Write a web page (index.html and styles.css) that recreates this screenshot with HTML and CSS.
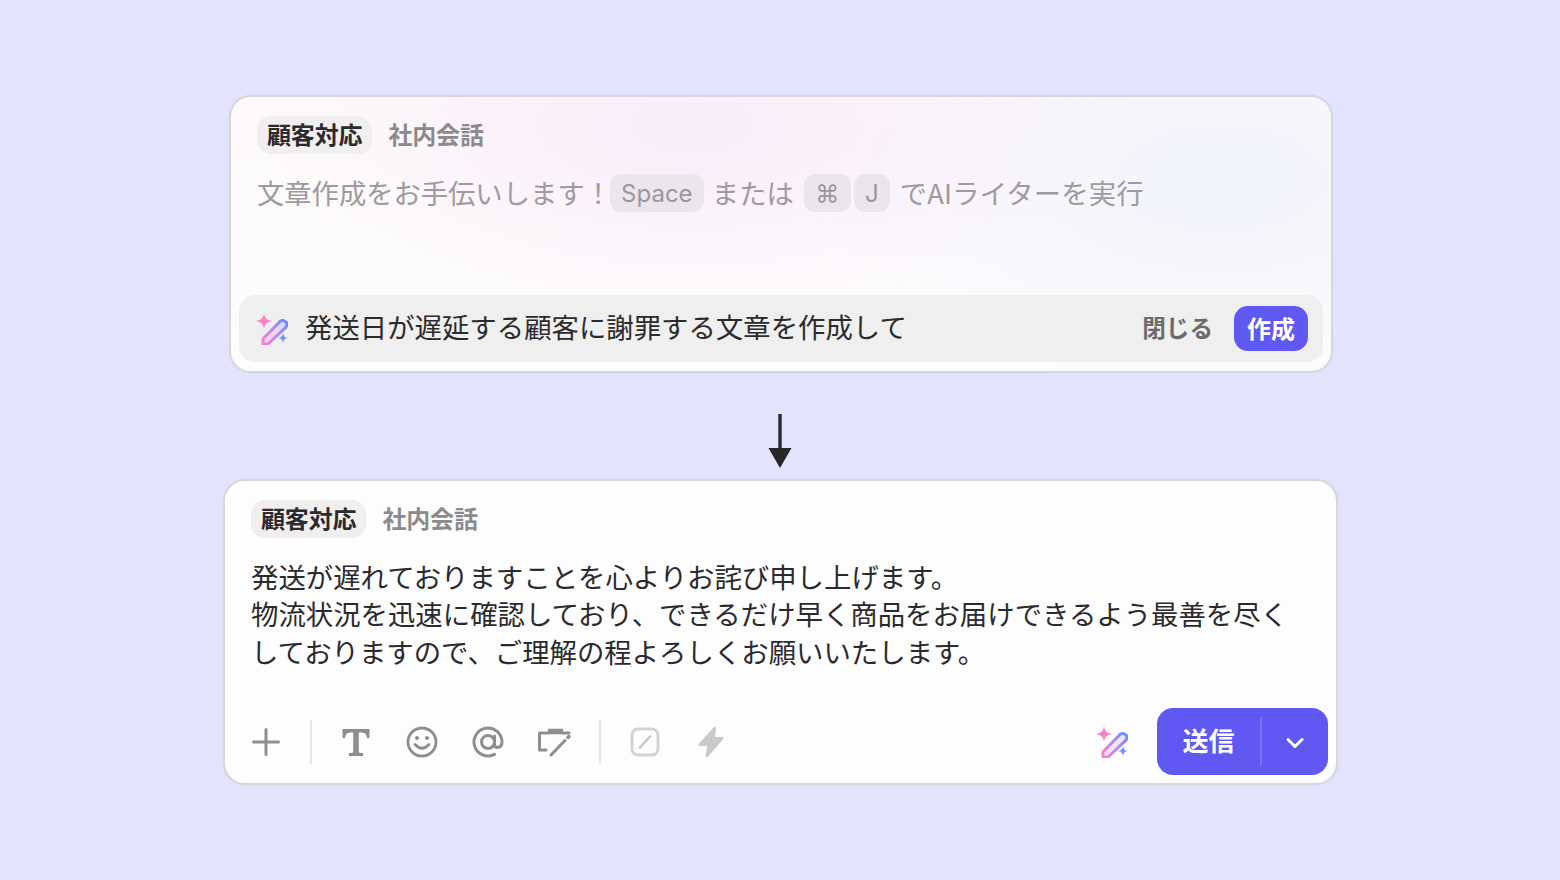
FILE: index.html
```html
<!DOCTYPE html>
<html lang="ja">
<head>
  <meta charset="UTF-8" />
  <meta name="viewport" content="width=device-width, initial-scale=1" />
  <title>AIライター</title>
  <link rel="stylesheet" href="styles.css">
</head>
<body>
  <svg class="defs" width="0" height="0" aria-hidden="true">
    <defs>
      <linearGradient id="magicGrad" gradientUnits="userSpaceOnUse" x1="6" y1="31" x2="31" y2="7">
        <stop offset="0" stop-color="#ff7fc8" />
        <stop offset="0.5" stop-color="#c285ea" />
        <stop offset="1" stop-color="#5f8dfb" />
      </linearGradient>
      <symbol id="magic" viewBox="0 0 32 32">
        <path d="M8 0 C8.8 5 10.5 6.8 16 8 C10.5 9.2 8.8 11 8 16 C7.2 11 5.5 9.2 0 8 C5.5 6.8 7.2 5 8 0Z" fill="#fb7fc4" />
        <path d="M27 19.5 C27.4 23 28.5 24.4 32 25 C28.5 25.6 27.4 27 27 30.5 C26.6 27 25.5 25.6 22 25 C25.5 24.4 26.6 23 27 19.5Z" fill="#6f95fb" />
        <path d="M7 31 L7 26 L24 8.5 Q27 6.4 29.8 8.8 Q32 11.6 29.8 14.4 L12 31 Z" fill="url(#magicGrad)" fill-opacity="0.2" stroke="url(#magicGrad)" stroke-width="3" stroke-linejoin="round" />
      </symbol>
    </defs>
  </svg>

  <section class="card card-ai">
    <div class="tabs">
      <span class="tab active">顧客対応</span>
      <span class="tab">社内会話</span>
    </div>
    <div class="placeholder">
      <span class="ph-text">文章作成をお手伝いします！</span>
      <kbd class="key key-space">Space</kbd>
      <span class="ph-text word-or">または</span>
      <kbd class="key key-cmd">⌘</kbd>
      <kbd class="key key-j">J</kbd>
      <span class="ph-text word-run">でAIライターを実行</span>
    </div>
    <div class="prompt-bar">
      <svg class="magic-icon" width="32" height="32"><use href="#magic" /></svg>
      <span class="prompt-text">発送日が遅延する顧客に謝罪する文章を作成して</span>
      <span class="close-btn">閉じる</span>
      <button class="create-btn">作成</button>
    </div>
  </section>

  <div class="arrow">
    <svg width="24" height="54" viewBox="0 0 24 54">
      <path d="M12 0 V36" stroke="#27272a" stroke-width="3.4" />
      <path d="M0.5 34 H23.5 L12 54 Z" fill="#27272a" />
    </svg>
  </div>

  <section class="card card-result">
    <div class="tabs">
      <span class="tab active">顧客対応</span>
      <span class="tab">社内会話</span>
    </div>
    <div class="message">
      <p>発送が遅れておりますことを心よりお詫び申し上げます。</p>
      <p>物流状況を迅速に確認しており、できるだけ早く商品をお届けできるよう最善を尽く</p>
      <p>しておりますので、ご理解の程よろしくお願いいたします。</p>
    </div>
    <div class="toolbar">
      <span class="tool">
        <svg width="28" height="28" viewBox="0 0 28 28"><path d="M14 1.5 V26.5 M1.5 14 H26.5" stroke="#8e8e8e" stroke-width="3" stroke-linecap="round" /></svg>
      </span>
      <span class="tool-sep"></span>
      <span class="tool">
        <svg width="30" height="30" viewBox="0 0 30 30"><path d="M1.5 2 H28.5 V11 H26 Q25.5 6 21 5.6 H17.8 V24.5 Q17.8 26 20 26 H22 V29 H8 V26 H10 Q12.2 26 12.2 24.5 V5.6 H9 Q4.5 6 4 11 H1.5 Z" fill="#8e8e8e" /></svg>
      </span>
      <span class="tool">
        <svg width="32" height="32" viewBox="0 0 32 32" fill="none" stroke="#8e8e8e" stroke-width="2.8" stroke-linecap="round"><circle cx="16" cy="16" r="14" /><path d="M9 18.5 Q16 26 23 18.5" /><circle cx="11" cy="12" r="1.5" fill="#8e8e8e" stroke-width="1" /><circle cx="21" cy="12" r="1.5" fill="#8e8e8e" stroke-width="1" /></svg>
      </span>
      <span class="tool">
        <svg width="32" height="32" viewBox="0 0 32 32" fill="none" stroke="#8e8e8e" stroke-width="3" stroke-linecap="round"><circle cx="16" cy="16" r="6.5" /><path d="M22.5 10 V18.5 Q22.5 21.5 26 21.5 Q30 21 30 15.5 A14 14 0 1 0 22.5 28.4" /></svg>
      </span>
      <span class="tool">
        <svg width="34" height="30" viewBox="0 0 34 30" fill="none" stroke="#8e8e8e" stroke-width="3" stroke-linecap="round" stroke-linejoin="round"><path d="M11 6 H2.5 V23 H9" /><path d="M26 6 H32" /><path d="M11 4.5 H26" stroke-width="5.5" stroke-linecap="butt" /><path d="M14 28 L28 13.5" /><path d="M31 10.5 L32 9.5" stroke-width="3.4" /></svg>
      </span>
      <span class="tool-sep tool-sep-wide"></span>
      <span class="tool">
        <svg width="30" height="30" viewBox="0 0 30 30" fill="none" stroke="#d3d3d3" stroke-width="3" stroke-linecap="round"><rect x="2" y="2" width="26" height="26" rx="6" /><path d="M10 20.5 L20 9.5" stroke="#c8c8c8" stroke-width="2.6" /></svg>
      </span>
      <span class="tool">
        <svg width="28" height="34" viewBox="0 0 28 34"><path d="M17.5 1.5 Q19 1 19 3 L18 12 H25 Q27 12.5 26 14.5 L11 31.5 Q8.5 33.5 8.5 30.5 L10 21 H3 Q1 20.5 2 18.5 Z" fill="#c9c9c9" /></svg>
      </span>
      <span class="spacer"></span>
      <svg class="magic-icon" width="32" height="32"><use href="#magic" /></svg>
      <div class="send-btn">
        <span class="send-label">送信</span>
        <span class="send-menu">
          <svg width="18" height="12" viewBox="0 0 18 12"><path d="M2 2.5 L9 9.5 L16 2.5" fill="none" stroke="#fff" stroke-width="3" stroke-linecap="round" stroke-linejoin="round" /></svg>
        </span>
      </div>
    </div>
  </section>
</body>
</html>
```

FILE: styles.css
```css
:root {
  --primary: #5f58f2;
  --text: #2b2b2d;
  --muted: #8f8f8f;
}
* {
  margin: 0;
  padding: 0;
  box-sizing: border-box;
}
body {
  width: 1560px;
  height: 880px;
  overflow: hidden;
  background: #e4e3fe;
  font-family: "Noto Sans CJK JP", "Noto Sans", sans-serif;
  color: var(--text);
  display: flex;
  flex-direction: column;
  align-items: center;
  padding-top: 95px;
}
.defs {
  position: absolute;
}
.card {
  border: 2px solid #d9d7d9;
  border-radius: 22px;
  display: flex;
  flex-direction: column;
  box-shadow: 0 0 1px rgba(0,0,0,0.12);
}
.card-ai {
  width: 1104px;
  height: 278px;
  margin-left: 2px;
  padding: 19px 8px 9px;
  background:
    radial-gradient(420px 200px at 42% 10%, #f9ecf9 0%, rgba(249,236,249,0) 100%),
    radial-gradient(420px 220px at 90% 30%, #f1f3fc 0%, rgba(241,243,252,0) 100%),
    linear-gradient(180deg, #fdf9fa 0%, #fdfdfd 90%);
}
.card-result {
  width: 1115px;
  height: 306px;
  margin-top: 11px;
  margin-left: 1px;
  padding: 19px 8px 8px;
  background: #fdfdfd;
}
.tabs {
  display: flex;
  gap: 6px;
  padding-left: 18px;
}
.tab {
  height: 38px;
  padding: 0 10px;
  font-size: 24px;
  font-weight: 700;
  line-height: 36px;
  color: #8b8b8b;
  border-radius: 14px;
  letter-spacing: -0.15px;
}
.tab.active {
  background: #f0eeee;
  color: var(--text);
}

/* ai writer card */
.placeholder {
  display: flex;
  align-items: center;
  height: 38px;
  margin-top: 20px;
  padding-left: 18px;
  font-size: 27.3px;
  color: #9e9a9e;
  white-space: nowrap;
}
.ph-text {
  padding-bottom: 2px;
}
.key {
  height: 38px;
  display: flex;
  align-items: center;
  justify-content: center;
  background: #eae6ec;
  border-radius: 11px;
  font-family: "Inter", "Noto Sans", sans-serif;
  font-size: 24px;
  color: #9a969b;
}
.key-space { width: 94px; margin-left: -2px; }
.key-cmd { width: 47px; margin-left: 10px; }
.key-j { width: 36px; margin-left: 3px; }
.word-or { margin-left: 8px; }
.word-run { margin-left: 10px; letter-spacing: 0.2px; }
.prompt-bar {
  margin-top: auto;
  height: 67px;
  background: #efefef;
  border-radius: 16px;
  display: flex;
  align-items: center;
  padding: 0 15px 0 17px;
}
.prompt-text {
  margin-left: 17px;
  padding-bottom: 5px;
  font-size: 27.4px;
  color: var(--text);
}
.close-btn {
  margin-left: auto;
  padding-bottom: 3px;
  font-size: 23.6px;
  font-weight: 700;
  color: #6b6b6b;
}
.create-btn {
  margin-left: 21px;
  width: 74px;
  height: 45px;
  padding-bottom: 3px;
  border: none;
  border-radius: 14px;
  background: var(--primary);
  color: #fff;
  font-family: inherit;
  font-size: 24px;
  font-weight: 700;
}

/* arrow between the cards */
.arrow {
  height: 54px;
  margin-top: 41px;
  line-height: 0;
}

/* result card */
.message {
  margin-top: 20px;
  padding-left: 18px;
  font-size: 27.4px;
  line-height: 37.25px;
  white-space: nowrap;
  color: var(--text);
}
.toolbar {
  margin-top: auto;
  display: flex;
  align-items: center;
  height: 67px;
}
.tool {
  width: 66px;
  height: 44px;
  display: flex;
  align-items: center;
  justify-content: center;
}
.tool-sep {
  width: 2px;
  height: 44px;
  margin: 0 11px;
  background: #e6e6e6;
}
.tool-sep-wide {
  margin-left: 12px;
}
.spacer {
  flex: 1;
}
.send-btn {
  margin-left: 29px;
  width: 171px;
  height: 67px;
  border-radius: 16px;
  background: var(--primary);
  color: #fff;
  display: flex;
  align-items: center;
}
.send-label {
  width: 105px;
  height: 48px;
  line-height: 44px;
  text-align: center;
  font-size: 26px;
  font-weight: 700;
  border-right: 2px solid #7771f4;
}
.send-menu {
  flex: 1;
  display: flex;
  justify-content: center;
  padding-top: 2px;
}
```
